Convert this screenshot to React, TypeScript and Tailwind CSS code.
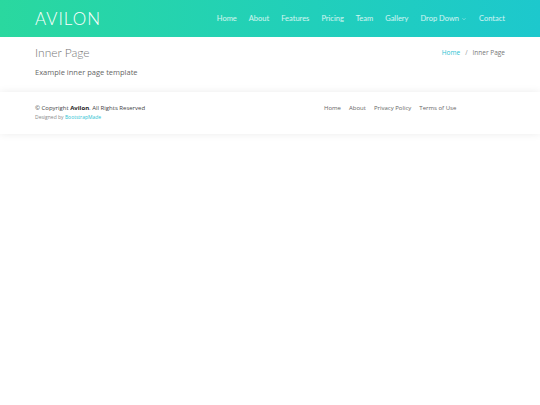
import React from "react";

const navItems = ["Home", "About", "Features", "Pricing", "Team", "Gallery"];

export default function App() {
  return (
    <div className="min-h-[405px] bg-white" style={{ fontFamily: '"Open Sans", sans-serif' }}>
      <header className="h-[37px] bg-gradient-to-r from-[#2ad89f] to-[#1dc8cd]">
        <div className="mx-auto flex h-full max-w-[470px] items-center justify-between">
          <div className="text-[17px] font-light tracking-[1px] text-white" style={{ fontFamily: 'Lato, sans-serif' }}>
            AVILON
          </div>
          <nav className="flex items-center gap-[12px] text-[7.5px] text-white/80" style={{ fontFamily: 'Lato, sans-serif' }}>
            {navItems.map((n) => (
              <span key={n}>{n}</span>
            ))}
            <span className="flex items-center gap-[2px]">
              Drop Down
              <svg width="6" height="6" viewBox="0 0 24 24" fill="none" stroke="currentColor" strokeWidth="2">
                <path d="M6 9l6 6 6-6" />
              </svg>
            </span>
            <span>Contact</span>
          </nav>
        </div>
      </header>

      <section className="pt-[7px] pb-[14px]">
        <div className="mx-auto max-w-[470px]">
          <div className="flex items-center justify-between">
            <h2 className="text-[12px] font-light text-[#777]" style={{ fontFamily: 'Lato, sans-serif' }}>Inner Page</h2>
            <ol className="flex items-center gap-[5px] text-[6.5px] text-[#777]">
              <li className="text-[#2cc3d3]">Home</li>
              <li className="text-[#999]">/</li>
              <li>Inner Page</li>
            </ol>
          </div>
          <p className="mt-[5px] text-[7.5px] text-[#666]">Example inner page template</p>
        </div>
      </section>

      <footer className="bg-white pt-[12px] pb-[12px] shadow-[0_0_8px_rgba(0,0,0,0.08)]">
        <div className="mx-auto flex max-w-[470px] items-start">
          <div className="w-[289px]">
            <div className="text-[6px] text-[#444]">
              © Copyright <strong className="font-bold text-[#222]">Avilon</strong>. All Rights Reserved
            </div>
            <div className="mt-[1px] text-[5px] text-[#888]">
              Designed by <span className="text-[#2cc3d3]">BootstrapMade</span>
            </div>
          </div>
          <div className="flex gap-[8px] text-[6px] text-[#666]">
            <span>Home</span>
            <span>About</span>
            <span>Privacy Policy</span>
            <span>Terms of Use</span>
          </div>
        </div>
      </footer>
    </div>
  );
}
